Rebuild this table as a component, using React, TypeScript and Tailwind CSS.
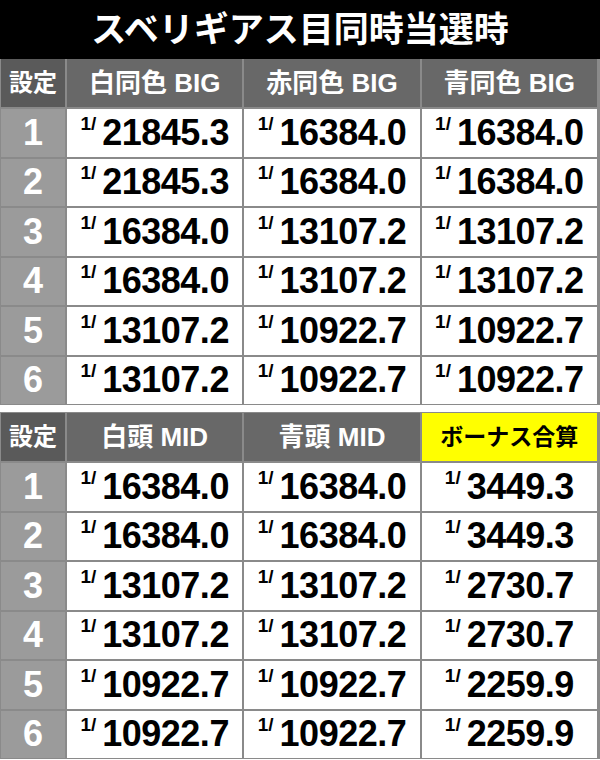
import React from 'react';

const FONT = { fontFamily: '"Liberation Sans", "Noto Sans CJK JP", sans-serif' };

interface TableProps {
  headers: string[];
  rows: string[][];
  highlightLast?: boolean;
  extraTop?: boolean;
}

function Value({ v }: { v: string }) {
  return (
    <div className="flex items-start justify-center text-black font-bold">
      <span className="text-[19px] leading-none -mt-[1px] mr-[6px]">1/</span>
      <span className="text-[36px] leading-none tracking-[-0.5px]">{v}</span>
    </div>
  );
}

function OddsTable({ headers, rows, highlightLast, extraTop }: TableProps) {
  return (
    <div
      className={`grid grid-cols-[64px_1fr_1fr_1fr] gap-[2px] bg-[#8a8a8a] pl-[1px] pr-[3px] pb-[1px] ${
        extraTop ? 'pt-[1px]' : ''
      }`}
    >
      {/* Header */}
      <div className="h-[48px] bg-[#5a5a5a] flex items-center justify-center text-white font-bold text-[24px]">
        設定
      </div>
      {headers.map((h, i) => {
        const yellow = highlightLast && i === headers.length - 1;
        return (
          <div
            key={h}
            className={`h-[48px] flex items-center justify-center font-bold ${
              yellow ? 'bg-[#ffff00] text-black text-[23px]' : 'bg-[#686868] text-white text-[26px]'
            }`}
          >
            {h}
          </div>
        );
      })}

      {/* Rows */}
      {rows.map((r, ri) => (
        <React.Fragment key={ri}>
          <div className="h-[47.5px] bg-[#9b9b9b] flex items-center justify-center text-white font-bold text-[36px] leading-none">
            {ri + 1}
          </div>
          {r.map((v, ci) => (
            <div key={ci} className="h-[47.5px] bg-white flex items-center justify-center">
              <Value v={v} />
            </div>
          ))}
        </React.Fragment>
      ))}
    </div>
  );
}

export default function App() {
  const top = [
    ['21845.3', '16384.0', '16384.0'],
    ['21845.3', '16384.0', '16384.0'],
    ['16384.0', '13107.2', '13107.2'],
    ['16384.0', '13107.2', '13107.2'],
    ['13107.2', '10922.7', '10922.7'],
    ['13107.2', '10922.7', '10922.7'],
  ];

  const bottom = [
    ['16384.0', '16384.0', '3449.3'],
    ['16384.0', '16384.0', '3449.3'],
    ['13107.2', '13107.2', '2730.7'],
    ['13107.2', '13107.2', '2730.7'],
    ['10922.7', '10922.7', '2259.9'],
    ['10922.7', '10922.7', '2259.9'],
  ];

  return (
    <div className="w-[600px] h-[760px] bg-white overflow-hidden" style={FONT}>
      {/* Title */}
      <div className="h-[59px] bg-black flex items-center justify-center text-white font-bold text-[35px] leading-none">
        スベリギアス目同時当選時
      </div>

      <OddsTable headers={['白同色 BIG', '赤同色 BIG', '青同色 BIG']} rows={top} />

      <div className="h-[7px]" />

      <OddsTable headers={['白頭 MID', '青頭 MID', 'ボーナス合算']} rows={bottom} highlightLast extraTop />
    </div>
  );
}
